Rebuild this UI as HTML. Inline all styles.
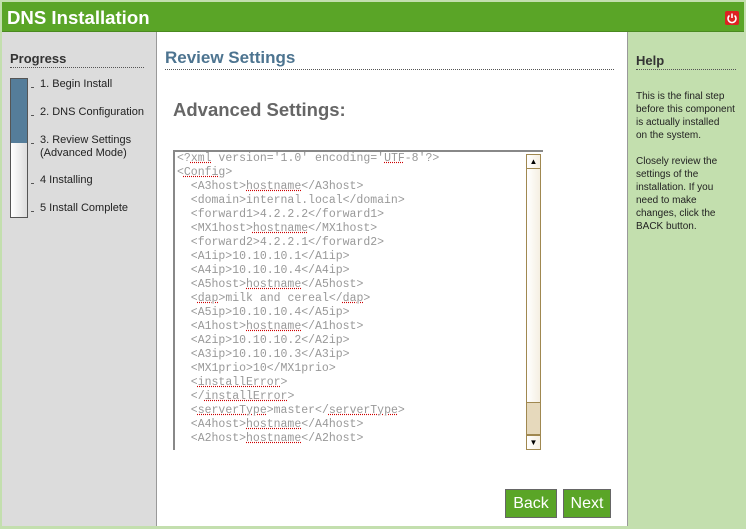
<!DOCTYPE html>
<html><head><style>
*{margin:0;padding:0;box-sizing:border-box}
body{width:746px;height:529px;background:#c3dfae;position:relative;overflow:hidden;font-family:"Liberation Sans",sans-serif}
#hdr{position:absolute;left:2px;top:2px;width:742px;height:30px;background:#5aa527;border-bottom:1px solid #4a8a20}
#hdr h1{position:absolute;left:5px;top:5px;color:#fff;font-size:18.6px;font-weight:bold}
#pw{position:absolute;right:5px;top:9px;width:14px;height:14px;background:#d22;border-radius:2px}
#left{position:absolute;left:2px;top:32px;width:155px;height:494px;background:#dcdcdc;border-right:1px solid #999}
#main{position:absolute;left:157px;top:32px;width:471px;height:494px;background:#fff;border-right:1px solid #999}
.h{font-weight:bold;font-size:13px;color:#333;border-bottom:1px dotted #555}
#prog{position:absolute;left:10px;top:51px;width:134px;padding-bottom:1px}
#bar{position:absolute;left:10px;top:78px;width:18px;height:140px;border:1px solid #555;background:linear-gradient(90deg,#fff,#eee,#ddd)}
#bar div{height:64px;background:#557d9a}
.st{position:absolute;left:40px;font-size:11px;color:#222;line-height:13px}
.st:before{content:"";position:absolute;left:-9px;top:9px;width:3px;height:1px;background:#555}
#rs{position:absolute;left:8px;top:16px;width:449px;font-size:17px;color:#4d7490;padding-bottom:1px;border-bottom:1px dotted #555;font-weight:bold}
#adv{position:absolute;left:16px;top:67px;font-size:18.5px;font-weight:bold;color:#666}
#ta{position:absolute;left:16px;top:118px;width:370px;height:300px;border-top:2px solid #888;border-left:2px solid #888;background:#fff}
#code{position:absolute;left:2px;top:0;font-family:"Liberation Mono",monospace;font-size:11.5px;color:#999;line-height:14px;white-space:pre}
#code u{text-decoration:underline dotted #c00}
#sb{position:absolute;left:351px;top:2px;width:15px;height:296px;border:1px solid #a08850;background:linear-gradient(90deg,#fff,#f5efe2)}
#thumb{position:absolute;left:0;top:247px;width:13px;height:33px;background:#e6d9bc;border-top:1px solid #a08850;border-bottom:1px solid #a08850}
.ar{position:absolute;left:0;width:13px;height:14px;font-size:8px;text-align:center;line-height:14px;color:#000}
.btn{position:absolute;top:457px;height:29px;background:#5aa527;border:1px solid #666;color:#fff;font-size:16px;text-align:center;line-height:27px}
#help{position:absolute;left:636px;top:53px;width:100px;padding-bottom:1px}
.ht{position:absolute;left:636px;font-size:10px;line-height:13px;color:#222}
</style></head><body>
<div id="hdr"><h1>DNS Installation</h1><div id="pw"><svg width="14" height="14" viewBox="0 0 14 14"><path d="M4.5 4.5A4 4 0 1 0 9.5 4.5" fill="none" stroke="#fff" stroke-width="1.6"/><path d="M7 2.5V7" stroke="#fff" stroke-width="1.6"/></svg></div></div>
<div id="left"></div>
<div class="h" id="prog">Progress</div>
<div id="bar"><div></div></div>
<div class="st" style="top:78px">1. Begin Install</div>
<div class="st" style="top:106px">2. DNS Configuration</div>
<div class="st" style="top:134px">3. Review Settings<br>(Advanced Mode)</div>
<div class="st" style="top:174px">4 Installing</div>
<div class="st" style="top:202px">5 Install Complete</div>
<div id="main">
<div id="rs">Review Settings</div>
<div id="adv">Advanced Settings:</div>
<div id="ta"><div id="code">&lt;?<u>xml</u> version='1.0' encoding='<u>UTF</u>-8'?&gt;
&lt;<u>Config</u>&gt;
  &lt;A3host&gt;<u>hostname</u>&lt;/A3host&gt;
  &lt;domain&gt;internal.local&lt;/domain&gt;
  &lt;forward1&gt;4.2.2.2&lt;/forward1&gt;
  &lt;MX1host&gt;<u>hostname</u>&lt;/MX1host&gt;
  &lt;forward2&gt;4.2.2.1&lt;/forward2&gt;
  &lt;A1ip&gt;10.10.10.1&lt;/A1ip&gt;
  &lt;A4ip&gt;10.10.10.4&lt;/A4ip&gt;
  &lt;A5host&gt;<u>hostname</u>&lt;/A5host&gt;
  &lt;<u>dap</u>&gt;milk and cereal&lt;/<u>dap</u>&gt;
  &lt;A5ip&gt;10.10.10.4&lt;/A5ip&gt;
  &lt;A1host&gt;<u>hostname</u>&lt;/A1host&gt;
  &lt;A2ip&gt;10.10.10.2&lt;/A2ip&gt;
  &lt;A3ip&gt;10.10.10.3&lt;/A3ip&gt;
  &lt;MX1prio&gt;10&lt;/MX1prio&gt;
  &lt;<u>installError</u>&gt;
  &lt;/<u>installError</u>&gt;
  &lt;<u>serverType</u>&gt;master&lt;/<u>serverType</u>&gt;
  &lt;A4host&gt;<u>hostname</u>&lt;/A4host&gt;
  &lt;A2host&gt;<u>hostname</u>&lt;/A2host&gt;</div>
<div id="sb"><div class="ar" style="top:0;border-bottom:1px solid #a08850">▲</div><div id="thumb"></div><div class="ar" style="bottom:0;border-top:1px solid #a08850">▼</div></div>
</div>
<div class="btn" style="left:348px;width:52px">Back</div>
<div class="btn" style="left:406px;width:48px">Next</div>
</div>
<div class="h" id="help">Help</div>
<div class="ht" style="top:90px">This is the final step<br>before this component<br>is actually installed<br>on the system.</div>
<div class="ht" style="top:155px">Closely review the<br>settings of the<br>installation. If you<br>need to make<br>changes, click the<br>BACK button.</div>
</body></html>
